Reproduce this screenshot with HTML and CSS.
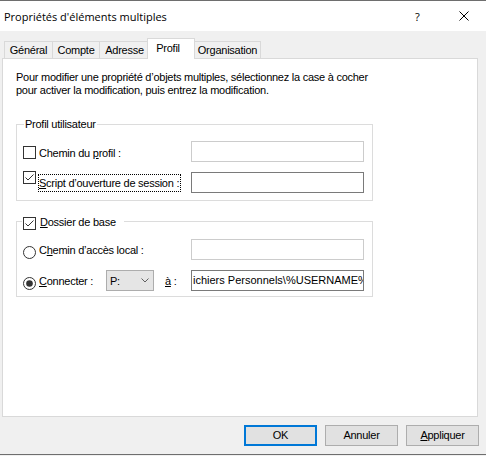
FILE: index.html
```html
<!DOCTYPE html>
<html lang="fr">
<head>
<meta charset="utf-8">
<title>Propriétés d'éléments multiples</title>
<link rel="stylesheet" href="styles.css">
</head>
<body>
<div class="window">
  <div class="titlebar">
    <span class="title">Propriétés d'éléments multiples</span>
    <span class="help">?</span>
    <svg class="close" width="10" height="10" viewBox="0 0 10 10"><path d="M0.5 0.5L9.5 9.5M9.5 0.5L0.5 9.5" stroke="#000" stroke-width="1" fill="none"/></svg>
  </div>
  <div class="dialog">
    <div class="tabstrip">
      <span class="gap lead"></span>
      <span class="tab w-gen">Général</span>
      <span class="tab w-cpt">Compte</span>
      <span class="tab w-adr">Adresse</span>
      <span class="tab active w-pro">Profil</span>
      <span class="tab last w-org">Organisation</span>
      <span class="gap fill"></span>
    </div>
    <div class="pane">
      <p class="intro">Pour modifier une propriété d’objets multiples, sélectionnez la case à cocher<br>pour activer la modification, puis entrez la modification.</p>

      <div class="group g1">
        <div class="group-title">Profil utilisateur</div>
        <div class="row ra">
          <svg class="box" width="13" height="13" viewBox="0 0 13 13"><rect x="0.5" y="0.5" width="12" height="12" fill="#fff" stroke="#333"/></svg>
          <span class="lbl">Chemin du <u>p</u>rofil :</span>
          <span class="field off"></span>
        </div>
        <div class="row rb">
          <svg class="box" width="13" height="13" viewBox="0 0 13 13"><rect x="0.5" y="0.5" width="12" height="12" fill="#fff" stroke="#333"/><path d="M2.5 6.5L5 9L10.5 3.5" fill="none" stroke="#333" stroke-width="1"/></svg>
          <span class="lbl focus"><u>S</u>cript d’ouverture de session :</span>
          <span class="field"></span>
        </div>
      </div>

      <div class="group g2">
        <div class="group-title">
          <svg class="box" width="13" height="13" viewBox="0 0 13 13"><rect x="0.5" y="0.5" width="12" height="12" fill="#fff" stroke="#333"/><path d="M2.5 6.5L5 9L10.5 3.5" fill="none" stroke="#333" stroke-width="1"/></svg>
          <span class="lbl"><u>D</u>ossier de base</span>
        </div>
        <div class="row rc">
          <svg class="box" width="13" height="13" viewBox="0 0 13 13"><circle cx="6.5" cy="6.5" r="6" fill="#fff" stroke="#333"/></svg>
          <span class="lbl">C<u>h</u>emin d’accès local :</span>
          <span class="field off"></span>
        </div>
        <div class="row rd">
          <svg class="box" width="13" height="13" viewBox="0 0 13 13"><circle cx="6.5" cy="6.5" r="6" fill="#fff" stroke="#333"/><circle cx="6.5" cy="6.5" r="3.3" fill="#333"/></svg>
          <span class="lbl conn"><u>C</u>onnecter :</span>
          <span class="combo"><span>P:</span><svg class="chev" width="8" height="5" viewBox="0 0 8 5"><path d="M0.5 0.5L4 4L7.5 0.5" fill="none" stroke="#606060" stroke-width="1"/></svg></span>
          <span class="lbl to"><u>à</u> :</span>
          <span class="field"><span class="val">ichiers Personnels\%USERNAME%</span></span>
        </div>
      </div>
    </div>
    <div class="buttons">
      <span class="btn default">OK</span>
      <span class="btn">Annuler</span>
      <span class="btn"><u>A</u>ppliquer</span>
    </div>
  </div>
</div>
</body>
</html>
```
FILE: styles.css
```css
* { box-sizing: border-box; }
html, body { margin: 0; }
body {
  width: 486px;
  height: 456px;
  overflow: hidden;
  background: #f0f0f0;
  color: #000;
  font-family: "Liberation Sans", Arial, sans-serif;
  font-size: 11px;
  line-height: 13px;
  letter-spacing: -0.25px;
}
.window {
  height: 455px;
  border-top: 1px solid #6e6e6e;
  border-bottom: 1px solid #6e6e6e;
  display: flex;
  flex-direction: column;
}
.titlebar {
  height: 30px;
  flex: none;
  background: #fff;
  display: flex;
  align-items: center;
  font-family: "Open Sans", "Noto Sans", sans-serif;
  font-size: 11px;
  letter-spacing: 0;
}
.title { flex: 1; padding-left: 4px; }
.help { width: 7px; margin-right: 37px; }
.close { display: block; margin-right: 17px; }

.dialog {
  flex: 1;
  padding: 7px 8px 0 2px;
  display: flex;
  flex-direction: column;
}
.tabstrip {
  height: 21px;
  flex: none;
  display: flex;
  align-items: flex-end;
}
.gap { height: 1px; border-bottom: 1px solid #d9d9d9; }
.lead { width: 2px; }
.fill { flex: 1; }
.tab {
  height: 18px;
  padding-top: 2px;
  border-top: 1px solid #d9d9d9;
  border-left: 1px solid #d9d9d9;
  border-bottom: 1px solid #d9d9d9;
  background: #f0f0f0;
  text-align: center;
  white-space: nowrap;
}
.tab.active {
  height: 21px;
  padding-top: 3px;
  border-right: 1px solid #d9d9d9;
  border-bottom: none;
  background: #fff;
}
.tab.last { border-left: none; border-right: 1px solid #d9d9d9; }
.w-gen { width: 48px; }
.w-cpt { width: 47px; }
.w-adr { width: 48px; padding-left: 2px; }
.w-pro { width: 48px; padding-right: 6px; }
.w-org { width: 66px; }

.pane {
  height: 358px;
  flex: none;
  background: #fff;
  border: 1px solid #d9d9d9;
  border-top: none;
  padding: 12px 0 0 13px;
}
.intro {
  margin: 0;
  white-space: nowrap;
}

.group { width: 357px; border: 1px solid #dcdcdc; }
.g1 { margin-top: 27px; padding-bottom: 7px; }
.g2 { margin-top: 20px; padding-bottom: 5px; }
.group-title {
  width: max-content;
  height: 13px;
  margin: -7px 0 0 7px;
  padding: 0 1px;
  background: #fff;
}
.g2 .group-title {
  width: 102px;
  margin-left: 5px;
  padding: 0 0 0 1px;
  display: flex;
  align-items: flex-start;
}
.g2 .group-title .box { margin-top: 2px; }
.g2 .group-title .lbl { margin: 1px 0 0 4px; }

.row {
  height: 21px;
  display: flex;
  align-items: flex-start;
  padding: 0 8px 0 6px;
}
.box { display: block; flex: none; }
.lbl { white-space: nowrap; margin-left: 3px; }
.field {
  margin-left: auto;
  width: 173px;
  height: 21px;
  flex: none;
  border: 1px solid #7a7a7a;
  background: #fff;
  overflow: hidden;
}
.field.off { border-color: #cccccc; }
.val { display: block; padding: 3px 0 0 1px; white-space: nowrap; letter-spacing: 0; }

.ra { margin-top: 10px; }
.ra .box { margin-top: 5px; }
.ra .lbl { margin-top: 6px; }

.rb { margin-top: 10px; }
.rb .box { margin-top: -1px; }
.lbl.focus {
  margin: 2px 0 0 2px;
  padding: 3px 2px 2px 1px;
  outline: 1px dotted #000;
  outline-offset: -1px;
}

.rc { margin-top: 11px; }
.rc .box { margin-top: 7px; }
.rc .lbl { margin-top: 5px; }

.rd { margin-top: 10px; }
.rd .box { margin-top: 7px; }
.rd .lbl { margin-top: 5px; }
.lbl.conn { width: 67px; }
.lbl.to { margin-left: 11px; }
.combo {
  width: 48px;
  height: 21px;
  flex: none;
  display: flex;
  align-items: flex-start;
  padding: 4px 0 0 3px;
  border: 1px solid #adadad;
  background: #e5e5e5;
}
.chev { display: block; margin: 3px 4px 0 auto; }

.buttons {
  display: flex;
  justify-content: flex-end;
  gap: 8px;
  margin: 8px -1px 0 0;
}
.btn {
  width: 73px;
  height: 21px;
  padding-top: 3px;
  border: 1px solid #adadad;
  background: #e1e1e1;
  text-align: center;
}
.btn.default {
  border-color: #0078d7;
  box-shadow: inset 0 0 0 1px #0078d7;
}
```
